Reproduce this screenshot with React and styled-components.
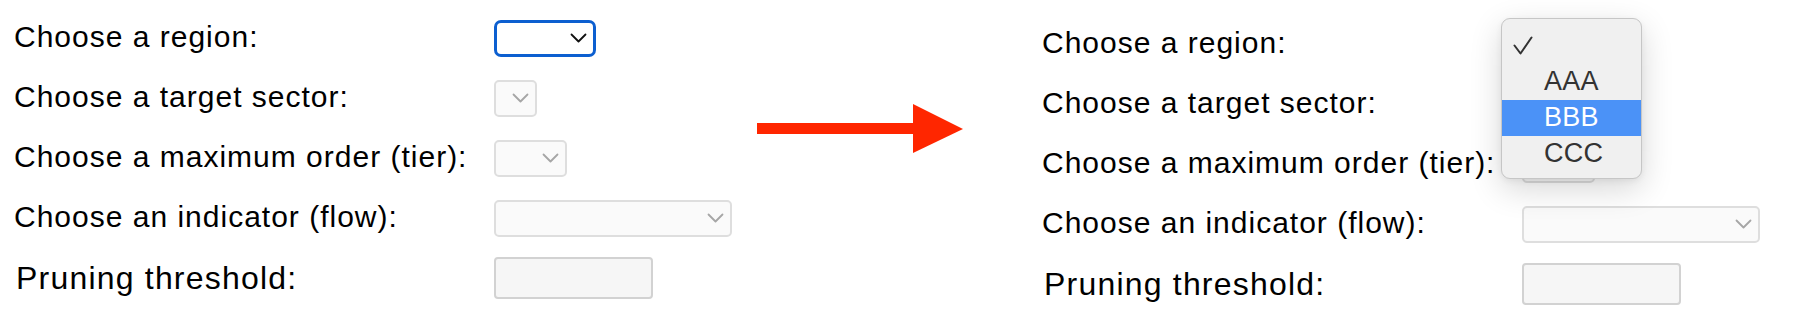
import React from "react";
import styled, { createGlobalStyle, css } from "styled-components";

const GlobalStyle = createGlobalStyle`
  html, body {
    margin: 0;
    padding: 0;
    background: #ffffff;
    font-family: "Liberation Sans", Arial, sans-serif;
  }
`;

const Page = styled.div`
  display: flex;
  align-items: flex-start;
  padding-left: 14px;
  height: 330px;
  box-sizing: border-box;
`;

const Form = styled.div`
  display: grid;
  grid-template-columns: 480px 1fr;
  grid-auto-rows: 60px;
  align-items: center;
  width: ${(p) => p.$width}px;
  padding-top: ${(p) => p.$top}px;
`;

const Label = styled.label`
  font-size: ${(p) => (p.$large ? 32 : 30)}px;
  letter-spacing: ${(p) => (p.$large ? 1.2 : 1)}px;
  color: #000;
  white-space: nowrap;
  padding-bottom: ${(p) => (p.$large ? 0 : 3)}px;
  margin-left: ${(p) => (p.$large ? 2 : 0)}px;
`;

const Cell = styled.div`
  position: relative;
  display: flex;
  align-items: center;
`;

const Select = styled.div`
  box-sizing: border-box;
  width: ${(p) => p.$w}px;
  height: 37px;
  display: flex;
  align-items: center;
  justify-content: flex-end;
  padding-right: 6px;

  ${(p) =>
    p.$focused
      ? css`
          border: 3px solid #0c5fd0;
          border-radius: 7px;
          background: #ffffff;
          color: #111111;
        `
      : css`
          border: 2px solid #dedede;
          border-radius: 5px;
          background: #fafafa;
          color: #a6a6a6;
        `}
`;

const TextInput = styled.input`
  box-sizing: border-box;
  width: 159px;
  height: 42px;
  border: 2px solid #d2d2d2;
  border-radius: 4px;
  background: #f6f6f6;
  outline: none;
`;

const Arrow = styled.div`
  width: 206px;
  margin-top: 104px;
  display: flex;
`;

const RightSide = styled.div`
  margin-left: 79px;
`;

const Menu = styled.div`
  position: absolute;
  left: -21px;
  top: -8px;
  z-index: 10;
  box-sizing: border-box;
  width: 141px;
  height: 161px;
  padding: 9px 0 8px;
  background: #f0f0f0;
  border: 1px solid #c6c6c6;
  border-radius: 9px;
  overflow: hidden;
  box-shadow: 0 10px 32px rgba(0, 0, 0, 0.16), 0 2px 6px rgba(0, 0, 0, 0.06);
`;

const MenuItem = styled.div`
  height: 36px;
  display: flex;
  align-items: center;
  padding-left: ${(p) => (p.$check ? 11 : 42)}px;
  font-size: 27px;
  letter-spacing: 0.3px;
  color: ${(p) => (p.$active ? "#ffffff" : "#333333")};
  background: ${(p) => (p.$active ? "#4b92f7" : "transparent")};
`;

const Chevron = () => (
  <svg width="17" height="10" viewBox="0 0 17 10" fill="none">
    <polyline
      points="1.5,1.5 8.5,8.5 15.5,1.5"
      stroke="currentColor"
      strokeWidth="1.8"
      strokeLinecap="round"
      strokeLinejoin="round"
    />
  </svg>
);

const Check = () => (
  <svg width="20" height="19" viewBox="0 0 20 19" fill="none">
    <polyline
      points="1.5,9.5 7.5,17.5 18.5,1.5"
      stroke="#333333"
      strokeWidth="2"
      strokeLinecap="round"
      strokeLinejoin="round"
    />
  </svg>
);

const rows = [
  { label: "Choose a region:", width: 102, key: "region" },
  { label: "Choose a target sector:", width: 43, key: "sector" },
  { label: "Choose a maximum order (tier):", width: 73, key: "tier" },
  { label: "Choose an indicator (flow):", width: 238, key: "indicator" },
];

const RegionMenu = () => (
  <Menu>
    <MenuItem $check>
      <Check />
    </MenuItem>
    <MenuItem>AAA</MenuItem>
    <MenuItem $active>BBB</MenuItem>
    <MenuItem>CCC</MenuItem>
  </Menu>
);

const FilterForm = ({ top, open, width }) => (
  <Form $top={top} $width={width}>
    {rows.map((r) => (
      <React.Fragment key={r.key}>
        <Label>{r.label}</Label>
        <Cell>
          <Select $w={r.width} $focused={!open && r.key === "region"}>
            <Chevron />
          </Select>
          {open && r.key === "region" && <RegionMenu />}
        </Cell>
      </React.Fragment>
    ))}
    <Label $large>Pruning threshold:</Label>
    <Cell>
      <TextInput type="text" readOnly />
    </Cell>
  </Form>
);

export default function App() {
  return (
    <>
      <GlobalStyle />
      <Page>
        <FilterForm top={8} width={743} />
        <Arrow>
          <svg width="206" height="49" viewBox="0 0 206 49">
            <rect x="0" y="19" width="158" height="11" fill="#ff2600" />
            <polygon points="156,0 206,25 156,49" fill="#ff2600" />
          </svg>
        </Arrow>
        <RightSide>
          <FilterForm top={14} open width={740} />
        </RightSide>
      </Page>
    </>
  );
}
